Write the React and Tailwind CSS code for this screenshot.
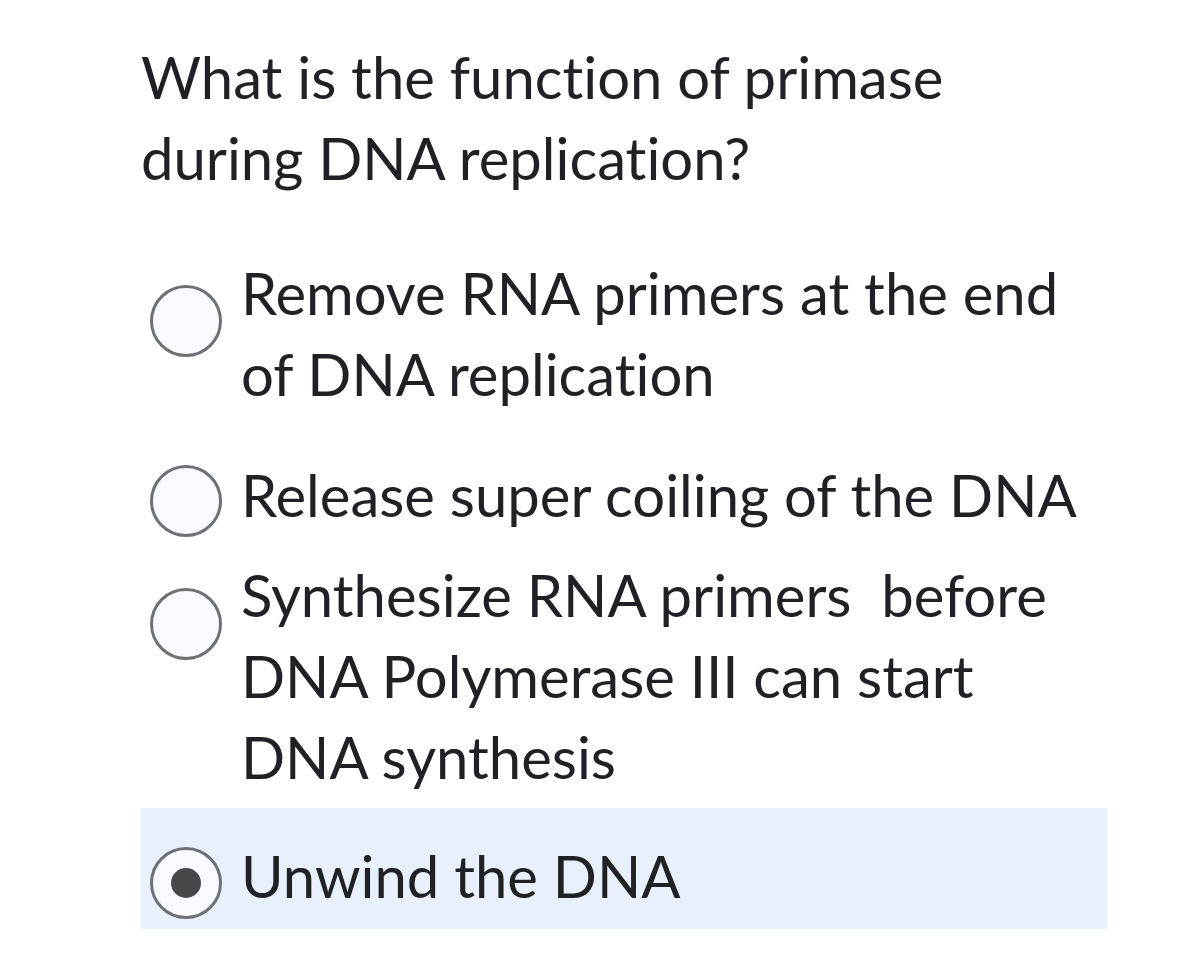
import React from "react";

const options = [
  { text: "Remove RNA primers at the end of DNA replication", mt: "mt-[54px]", dot: "mt-[33px]" },
  { text: "Release super coiling of the DNA", mt: "mt-[40px]", dot: "mt-[11px]" },
  { text: "Synthesize RNA primers\u00a0 before DNA Polymerase III can start DNA synthesis", mt: "mt-[17px]", dot: "mt-[34px]" },
];

function Radio({ checked, className }) {
  return (
    <span
      className={`flex shrink-0 items-center justify-center w-[72px] h-[72px] rounded-full border-[3px] border-[#6d7175] bg-[#f8faff] ${className}`}
    >
      {checked && <span className="w-[30px] h-[30px] rounded-full bg-[#46494c]" />}
    </span>
  );
}

export default function App() {
  return (
    <div className="min-h-screen bg-white font-['Lato',sans-serif] [font-variant-ligatures:none] text-[#1f2124] text-[58px] leading-[81px] pt-[36px]">
      <div className="ml-[141px] w-[966px]">
        <h1 className="font-normal pr-[120px]">What is the function of primase during DNA replication?</h1>

        {options.map((o, i) => (
          <div key={i} className={`flex items-start gap-[19px] pl-[9px] ${o.mt}`}>
            <Radio className={o.dot} />
            <p className="pr-[20px]">{o.text}</p>
          </div>
        ))}

        <div className="flex items-start gap-[19px] pl-[9px] mt-[11px] pt-[27px] pb-[10px] bg-[#e8f0fb]">
          <Radio checked className="mt-[12px]" />
          <p>Unwind the DNA</p>
        </div>
      </div>
    </div>
  );
}
